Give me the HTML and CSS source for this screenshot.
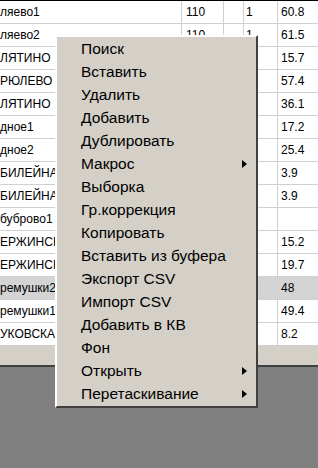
FILE: index.html
```html
<!DOCTYPE html>
<html lang="ru">
<head>
    <meta charset="UTF-8">
    <title>Таблица</title>
    <link rel="stylesheet" href="styles.css">
</head>
<body>
    <div class="grid">
        <div class="row"><div class="c1">ляево1</div><div class="c2">110</div><div class="c3"></div><div class="c4">1</div><div class="c5">60.8</div></div>
        <div class="row"><div class="c1">ляево2</div><div class="c2">110</div><div class="c3"></div><div class="c4">1</div><div class="c5">61.5</div></div>
        <div class="row"><div class="c1">ЛЯТИНО</div><div class="c2"></div><div class="c3"></div><div class="c4"></div><div class="c5">15.7</div></div>
        <div class="row"><div class="c1">РЮЛЕВО</div><div class="c2"></div><div class="c3"></div><div class="c4"></div><div class="c5">57.4</div></div>
        <div class="row"><div class="c1">ЛЯТИНО</div><div class="c2"></div><div class="c3"></div><div class="c4"></div><div class="c5">36.1</div></div>
        <div class="row"><div class="c1">дное1</div><div class="c2"></div><div class="c3"></div><div class="c4"></div><div class="c5">17.2</div></div>
        <div class="row"><div class="c1">дное2</div><div class="c2"></div><div class="c3"></div><div class="c4"></div><div class="c5">25.4</div></div>
        <div class="row"><div class="c1">БИЛЕЙНАЯ</div><div class="c2"></div><div class="c3"></div><div class="c4"></div><div class="c5">3.9</div></div>
        <div class="row"><div class="c1">БИЛЕЙНАЯ</div><div class="c2"></div><div class="c3"></div><div class="c4"></div><div class="c5">3.9</div></div>
        <div class="row"><div class="c1">буброво1</div><div class="c2"></div><div class="c3"></div><div class="c4"></div><div class="c5"></div></div>
        <div class="row"><div class="c1">ЕРЖИНСК</div><div class="c2"></div><div class="c3"></div><div class="c4"></div><div class="c5">15.2</div></div>
        <div class="row"><div class="c1">ЕРЖИНСК</div><div class="c2"></div><div class="c3"></div><div class="c4"></div><div class="c5">19.7</div></div>
        <div class="row selected"><div class="c1">ремушки2</div><div class="c2"></div><div class="c3"></div><div class="c4"></div><div class="c5">48</div></div>
        <div class="row"><div class="c1">ремушки1</div><div class="c2"></div><div class="c3"></div><div class="c4"></div><div class="c5">49.4</div></div>
        <div class="row"><div class="c1">УКОВСКАЯ</div><div class="c2"></div><div class="c3"></div><div class="c4"></div><div class="c5">8.2</div></div>
    </div>
    <div class="status"></div>

    <div class="menu">
        <div class="item">Поиск</div>
        <div class="item">Вставить</div>
        <div class="item">Удалить</div>
        <div class="item">Добавить</div>
        <div class="item">Дублировать</div>
        <div class="item">Макрос <span class="arrow"></span></div>
        <div class="item">Выборка</div>
        <div class="item">Гр.коррекция</div>
        <div class="item">Копировать</div>
        <div class="item">Вставить из буфера</div>
        <div class="item">Экспорт CSV</div>
        <div class="item">Импорт CSV</div>
        <div class="item">Добавить в КВ</div>
        <div class="item">Фон</div>
        <div class="item">Открыть <span class="arrow"></span></div>
        <div class="item">Перетаскивание <span class="arrow"></span></div>
    </div>
</body>
</html>
```

FILE: styles.css
```css
body {
    margin: 0;
    background: #808080;
    font-family: "Liberation Sans", Arial, sans-serif;
    position: relative;
    height: 468px;
    overflow: hidden;
}
.grid {
    background: #fff;
    border-top: 1px solid #000;
    font-size: 12px;
    color: #000;
}
.row {
    display: flex;
    height: 22px;
    line-height: 22px;
    border-bottom: 1px solid #d0d0d0;
}
.row > div {
    border-right: 1px solid #d0d0d0;
    box-sizing: border-box;
    padding-left: 4px;
    white-space: nowrap;
    overflow: hidden;
}
.row .c1 { width: 182px; padding-left: 0; }
.row .c2 { width: 42px; }
.row .c3 { width: 20px; }
.row .c4 { width: 34px; padding-left: 2px; }
.row .c5 { flex: 1; border-right: none; padding-left: 3px; }
.selected {
    background: #d4d4d4;
}
.status {
    height: 19px;
    background: #d4d0c8;
    border-bottom: 2px solid #404040;
}
.menu {
    position: absolute;
    left: 55px;
    top: 35px;
    width: 203px;
    box-sizing: border-box;
    background: #d4d0c8;
    border: 2px solid;
    border-color: #fff #404040 #404040 #fff;
    padding: 0 0 1px;
    font-size: 15.5px;
    color: #000;
}
.item {
    height: 23px;
    line-height: 23px;
    padding: 0 9px 0 24px;
    display: flex;
    align-items: center;
    justify-content: space-between;
    white-space: nowrap;
}
.arrow {
    width: 0;
    height: 0;
    border-left: 5px solid #000;
    border-top: 4px solid transparent;
    border-bottom: 4px solid transparent;
}
```
